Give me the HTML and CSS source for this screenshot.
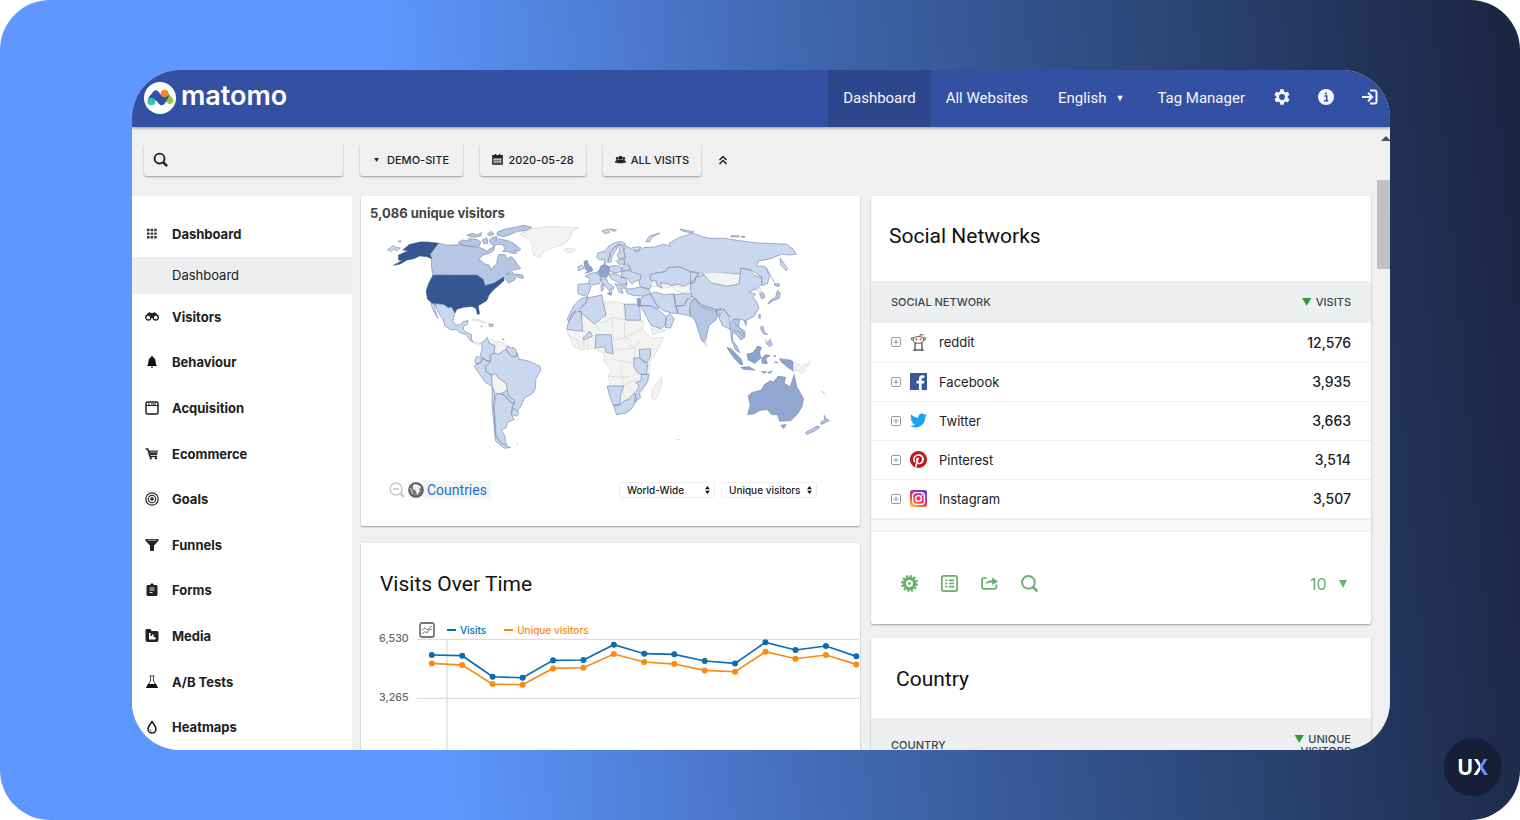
FILE: index.html
```html
<!DOCTYPE html>
<html lang="en">
<head>
    <meta charset="UTF-8">
    <meta name="viewport" content="width=device-width, initial-scale=1.0">
    <title>Matomo Dashboard</title>
    <link rel="stylesheet" href="styles.css">
</head>
<body>
    <div class="backdrop">
        <div class="window">
            <header class="topbar">
                <a href="#" class="brand">
                    <svg class="brand-mark" viewBox="43 51 92 92" aria-hidden="true">
                        <circle cx="89" cy="97" r="46" fill="#fff"/>
                        <path d="M103 86L117 104" stroke="#95c748" stroke-width="20" stroke-linecap="round"/>
                        <path d="M66 100L77 86L94 107L103 92" fill="none" stroke="#3152a0" stroke-width="21" stroke-linecap="round" stroke-linejoin="round"/>
                        <circle cx="102" cy="84" r="11" fill="#f38334"/>
                        <circle cx="64" cy="107" r="11" fill="#35bfc0"/>
                    </svg>
                    <span class="brand-name">matomo</span>
                </a>
                <nav class="topnav">
                    <a href="#" class="active">Dashboard</a>
                    <a href="#">All Websites</a>
                    <button type="button" class="language">English <span class="caret">▼</span></button>
                    <a href="#">Tag Manager</a>
                    <a href="#" class="icon-link" aria-label="Administration">
                        <svg viewBox="2 2 20 20"><path fill="currentColor" d="M19.14 12.94c.04-.3.06-.61.06-.94 0-.32-.02-.64-.07-.94l2.03-1.58c.18-.14.23-.41.12-.61l-1.92-3.32c-.12-.22-.37-.29-.59-.22l-2.39.96c-.5-.38-1.03-.7-1.62-.94l-.36-2.54c-.04-.24-.24-.41-.48-.41h-3.84c-.24 0-.43.17-.47.41l-.36 2.54c-.59.24-1.13.57-1.62.94l-2.39-.96c-.22-.08-.47 0-.59.22L2.74 8.87c-.12.21-.08.47.12.61l2.03 1.58c-.05.3-.09.63-.09.94s.02.64.07.94l-2.03 1.58c-.18.14-.23.41-.12.61l1.92 3.32c.12.22.37.29.59.22l2.39-.96c.5.38 1.03.7 1.62.94l.36 2.54c.05.24.24.41.48.41h3.84c.24 0 .44-.17.47-.41l.36-2.54c.59-.24 1.13-.56 1.62-.94l2.39.96c.22.08.47 0 .59-.22l1.92-3.32c.12-.22.07-.47-.12-.61l-2.01-1.58zM12 15.6a3.6 3.6 0 1 1 0-7.2 3.6 3.6 0 0 1 0 7.2z"/></svg>
                    </a>
                    <a href="#" class="icon-link" aria-label="Help">
                        <svg viewBox="0 0 16 16"><circle cx="8" cy="8" r="8" fill="currentColor"/><path d="M6.4 7h2.300v4.200M6 11.700h4.200M8 3.400v2" fill="none" stroke="#3450a3" stroke-width="1.600"/></svg>
                    </a>
                    <a href="#" class="icon-link" aria-label="Sign in">
                        <svg viewBox="0 0 16 16" fill="none" stroke="currentColor" stroke-width="2"><path d="M8 1.500h4.500a2 2 0 0 1 2 2v9a2 2 0 0 1-2 2H8M0 8h9M6 3.800L10.200 8L6 12.200"/></svg>
                    </a>
                </nav>
            </header>

            <div class="body">
                <div class="page">
                    <div class="toolbar">
                        <label class="search">
                            <svg viewBox="0 0 16 16" fill="none" stroke="#222" stroke-width="2"><circle cx="7" cy="7" r="5.300"/><path d="M11 11l4 4" stroke-width="2.600"/></svg>
                            <input type="search" aria-label="Search">
                        </label>
                        <button type="button" class="tool site"><span class="caret">▼</span>DEMO-SITE</button>
                        <button type="button" class="tool date">
                            <svg viewBox="0 0 12 12"><path d="M1 2h10v9H1z" fill="none" stroke="#222" stroke-width="1.600"/><path d="M1 2h10v3H1zM3 0h1.500v2H3zM7.500 0h1.500v2H7.500z" fill="#222"/><path d="M2 7h8M2 9h8M4.500 5v6M7.500 5v6" stroke="#222" stroke-width=".6"/></svg>
                            2020-05-28
                        </button>
                        <button type="button" class="tool visits">
                            <svg viewBox="0 0 12 12" fill="#222"><circle cx="6" cy="4" r="2.200"/><circle cx="2.500" cy="5" r="1.600"/><circle cx="9.500" cy="5" r="1.600"/><path d="M0 9.500q0-3 2.500-3h7q2.500 0 2.500 3zM3 10V8q0-2 3-2t3 2v2z"/></svg>
                            ALL VISITS
                        </button>
                        <button type="button" class="collapse" aria-label="Collapse">
                            <svg viewBox="0 0 10 10" fill="none" stroke="#222" stroke-width="1.500"><path d="M1.500 5L5 1.500L8.500 5M1.500 9L5 5.500L8.500 9"/></svg>
                        </button>
                    </div>

                    <div class="columns">
                        <nav class="sidebar">
                            <a href="#" class="item current">
                                <svg viewBox="0 0 14 14"><path d="M2 3h10M2 6.600h10M2 10.200h10" stroke="#333" stroke-width="2.400" stroke-dasharray="2.500 1.100"/></svg>
                                Dashboard
                            </a>
                            <a href="#" class="subitem">Dashboard</a>
                            <a href="#" class="item">
                                <svg viewBox="0 0 14 14"><path d="M3 3q2-1.500 3 0h2q1-1.500 3 0l2.800 4-4-1-1.500 2H5.700L4.500 6l-4 1z" fill="#222"/><circle cx="3.300" cy="7.500" r="2.500" fill="#fff" stroke="#222" stroke-width="1.300"/><circle cx="10.700" cy="7.500" r="2.500" fill="#fff" stroke="#222" stroke-width="1.300"/></svg>
                                Visitors
                            </a>
                            <a href="#" class="item">
                                <svg viewBox="0 0 14 14" fill="#111"><path d="M7 1q1 0 1 1.200Q10.500 3 10.500 6q0 3 1.500 5H2q1.500-2 1.500-5 0-3 2.500-3.800Q6 1 7 1zM5.800 11.500h2.400q-.2 1.200-1.200 1.200t-1.200-1.200z"/></svg>
                                Behaviour
                            </a>
                            <a href="#" class="item">
                                <svg viewBox="0 0 14 14" fill="none" stroke="#222"><rect x="1" y="1" width="12" height="12" rx="1.500" stroke-width="1.500"/><path d="M1 4.500h12M3 3h2M6 3h5"/></svg>
                                Acquisition
                            </a>
                            <a href="#" class="item">
                                <svg viewBox="0 0 14 14"><path d="M.5 2h2.300L5 9.500h7" fill="none" stroke="#222" stroke-width="1.500"/><path d="M3.500 3.500H13L12 8H5z" fill="#333"/><path d="M5 5h7" stroke="#fff" stroke-width=".5"/><circle cx="5.800" cy="11.300" r="1.100"/><circle cx="11" cy="11.300" r="1.100"/></svg>
                                Ecommerce
                            </a>
                            <a href="#" class="item">
                                <svg viewBox="0 0 14 14" fill="none" stroke="#333"><circle cx="7" cy="7" r="6.200" stroke-width="1.300"/><circle cx="7" cy="7" r="3.700" stroke-width="1.200"/><circle cx="7" cy="7" r="1.300" fill="#222"/></svg>
                                Goals
                            </a>
                            <a href="#" class="item">
                                <svg viewBox="0 0 14 14" fill="#222"><path d="M.5 1h13v1.800L9 7.500v5.500H5V7.500L.5 2.800z"/><path d="M2.500 2.200h9" stroke="#ccc" stroke-width=".9"/></svg>
                                Funnels
                            </a>
                            <a href="#" class="item">
                                <svg viewBox="0 0 14 14"><path d="M2.500 2H5l1-1.500h2L9 2h2.500l1 1v9l-1 1h-9l-1-1V3z" fill="#222"/><path d="M4.500 5h5M4.500 7h5M4.500 9.500h3" stroke="#fff" stroke-width=".9"/></svg>
                                Forms
                            </a>
                            <a href="#" class="item">
                                <svg viewBox="0 0 14 14"><path d="M1.500 0h4l1 2H12q1.500 0 1.500 1.500V11q0 2-2 2h-9q-2 0-2-2V1.500Q.5 0 1.500 0z" fill="#222"/><path d="M4 10.500V4h1.500v3h1.500V5.500h1.500v2.500H10.500v2.500z" fill="#fff"/></svg>
                                Media
                            </a>
                            <a href="#" class="item">
                                <svg viewBox="0 0 14 14"><path d="M4.500 1h5M5.500 1v5L2 12h10L8.500 6V1" fill="none" stroke="#444"/><path d="M3 9h8l2 4H1z" fill="#111"/></svg>
                                A/B Tests
                            </a>
                            <a href="#" class="item">
                                <svg viewBox="0 0 14 14" fill="none" stroke="#222" stroke-width="1.600"><path d="M7 1.500Q3 7 3 9a4 4 0 0 0 8 0Q11 7 7 1.500z"/><path d="M5 9.500q.3 1.300 1.500 1.600" stroke-width="1"/></svg>
                                Heatmaps
                            </a>
                        </nav>

                        <main class="widgets">
                            <div class="column left">
                                <section class="card map-card">
                                    <h2 class="map-title">5,086 unique visitors</h2>
                                    <svg class="map" viewBox="60 96 1380 690" role="img" aria-label="World map of unique visitors">
                                        <!-- Americas -->
                                        <path class="c1" d="M80 180L98 166L104 172L118 174L108 182L98 178L90 184ZM111 154l8-2v4z"/>
                                        <path class="c2" d="M232 160L262 166L300 164L330 170L355 172L366 176L378 184L392 174L402 170L398 182L386 190L365 196L355 208L372 222L386 226L390 242L396 232L408 222L410 206L414 194L432 194L440 206L452 200L462 210L470 224L480 236L458 240L436 254L456 248L468 256L462 270L444 280L432 264L410 276L388 288L372 290L366 268L350 258L216 256L212 232L212 208L207 193Z"/>
                                        <path class="c2" d="M292 158L304 150L330 154L322 146L346 148L360 156L356 168L334 170L308 166ZM318 136L334 130L350 134L362 128L360 138L338 142ZM364 150L378 144L382 160L370 162ZM380 132L392 124L400 132L386 138ZM386 150L396 142L410 140L404 152L414 146L430 150L446 154L462 162L480 178L472 184L460 180L468 190L452 190L440 184L426 186L432 176L426 164L408 164L398 168L390 160ZM410 126L430 118L462 112L490 106L514 112L496 122L470 124L442 136L426 140L408 134ZM468 252L486 256L488 266L472 262Z"/>
                                        <path class="c0" d="M478 132L510 118L560 110L598 110L654 114L634 124L630 140L624 148L612 162L580 172L556 182L546 190L536 204L520 196L514 178L516 164L506 148L484 138ZM610 180L624 174L644 178L640 186L620 188Z"/>
                                        <path class="us" d="M113 210L112 196L130 188L143 182L126 180L145 164L178 156L200 156L232 160L207 193L212 206L196 200L176 198L160 206L138 210L118 222L98 226L124 212Z"/>
                                        <path class="us" d="M216 256L348 256L366 268L372 288L400 280L428 262L430 272L412 288L398 300L384 316L378 332L352 348L356 372L350 374L346 356L334 350L308 352L288 358L282 370L276 364L272 352L262 354L248 344L214 340L200 328L196 304L202 284L212 264Z"/>
                                        <path class="c1" d="M210 340L222 344L222 360L232 386L224 376L214 354ZM222 342L248 344L262 354L272 352L282 370L276 392L284 406L300 404L306 396L322 392L318 404L308 410L308 420L318 428L332 434L332 448L338 458L326 450L316 434L296 428L290 420L270 420L252 408L246 388L232 368ZM384 402L398 404L396 410L386 410Z"/>
                                        <path class="c0" d="M334 390L348 386L378 400L362 396ZM338 458L352 460L362 458L350 466ZM384 460L390 448L404 456L428 458L440 468L436 478L424 486L412 494L402 490L402 468ZM394 556L404 552L416 568L436 580L440 600L420 612L406 612L396 592Z"/>
                                        <path class="c1" d="M440 468L454 476L456 472L464 478L468 490L468 500L452 500L444 492L436 478ZM362 460L380 442L384 460L402 468L400 490L388 496L390 516L376 512L358 498L364 480ZM348 500L366 506L360 518L346 524L342 512ZM346 524L360 518L366 506L376 512L390 516L374 530L376 546L392 556L394 590L374 578L358 556L340 530Z"/>
                                        <path class="c1" d="M402 490L412 494L424 486L436 478L444 492L452 500L468 500L470 490L474 508L504 514L538 530L540 542L526 566L524 598L514 612L492 624L480 650L468 666L454 654L462 640L444 620L436 606L440 600L436 580L416 568L404 552L392 556L376 546L374 530L390 516L388 496Z"/>
                                        <path class="c1" d="M420 612L440 602L444 620L462 632L460 642L448 636L432 618ZM456 654L474 668L468 680L452 674ZM406 612L420 612L432 618L448 636L460 642L454 654L452 674L460 690L440 698L436 714L422 722L432 738L434 756L438 766L420 758L406 738L404 700L400 650ZM394 590L402 612L398 650L402 700L404 738L420 762L450 774L430 776L404 754L400 710L394 650Z"/>
                                        <path class="dot" d="M360 408h4v3h-4zM426 448h4v3h-4zM468 760h3v2h-3zM952 748h4v2h-4z"/>

                                        <!-- Europe, Africa and Russia -->
                                        <g transform="translate(600 75)">
                                            <path class="c1" d="M190 110L194 92L210 100L226 96L242 96L234 108L220 106L228 112L250 98L282 96L310 88L330 94L326 86L342 76L360 66L388 58L396 54L430 66L450 70L492 70L530 76L590 84L640 86L680 88L700 104L708 118L690 120L664 118L648 124L630 132L594 138L590 154L612 154L618 160L628 184L622 206L606 212L604 186L570 164L542 160L544 178L462 172L434 180L408 172L390 170L358 156L324 158L316 170L280 176L268 184L276 204L268 222L240 216L236 202L240 184L214 172L206 152L190 148L194 130Z"/>
                                            <path class="c1" d="M256 80L266 64L298 54L274 68L268 80ZM358 42L400 50L392 54L366 48ZM660 130L682 160L678 168L662 150ZM512 62h24v4h-24zM544 64h10v3h-10zM124 48L142 42L148 52L132 56ZM146 42L168 44L162 50Z"/>
                                            <path class="c1" d="M108 126L112 114L134 108L146 92L166 82L184 80L196 88L188 92L172 88L160 98L146 112L150 124L142 136L132 148L130 132L118 136ZM172 88L188 94L190 110L194 128L176 132L170 120L178 108ZM150 114L160 98L170 92L166 108L156 120L152 140L142 144L146 126Z"/>
                                            <path class="c1" d="M168 138L190 130L192 148L176 148ZM186 156L196 146L208 156L206 166L184 166ZM146 154L170 152L182 156L184 170L164 174L146 168ZM184 170L206 166L216 172L242 180L240 194L222 200L214 208L200 190L182 188ZM144 178L164 176L184 186L196 190L200 206L182 208L168 200L150 190ZM164 206L184 212L198 208L196 220L182 220L188 236L176 232L170 218Z"/>
                                            <path class="c1" d="M52 208L84 206L92 214L82 240L66 242L52 236ZM74 184L90 176L108 172L122 186L118 206L94 210L84 204L88 190ZM108 172L116 166L118 184ZM118 192L138 192L142 204L160 216L158 224L150 220L154 234L146 238L146 226L130 210ZM122 210l6-4v20l-6 4zM140 236l14 0-2 6z"/>
                                            <path class="c3" d="M70 140L80 136L84 150L94 158L96 168L74 176L82 166L74 164ZM120 154L132 148L144 154L146 174L138 188L122 186L116 168Z"/>
                                            <path class="c1" d="M52 156L64 150L70 160L54 168ZM196 222L214 222L240 216L266 224L270 238L246 244L220 242L200 236Z"/>
                                            <path class="c0" d="M268 204L290 200L296 214L278 216ZM302 204L324 206L358 216L396 206L388 220L400 220L372 236L352 230L334 216L302 220Z"/>
                                            <path class="c1" d="M268 184L280 176L316 170L324 158L358 156L390 170L416 178L414 186L400 204L384 206L370 214L352 208L332 212L320 206L300 204L304 220L290 212L288 198L272 196ZM270 236L286 232L312 240L340 236L346 258L340 270L352 284L350 296L330 294L306 286L288 268ZM340 240L372 236L380 238L398 232L396 246L380 252L372 272L346 274ZM352 296L346 274L372 272L380 252L400 254L396 276L388 284L390 304L374 300Z"/>
                                            <path class="c1" d="M240 252L258 240L270 238L288 270L296 282L270 272L240 272ZM240 272L270 274L300 290L318 306L314 330L302 342L272 332L258 306ZM318 304L328 296L342 312L330 340L314 338Z"/>
                                            <path class="c3" d="M230 252l8-2v26l-6 2z"/>
                                            <path class="c0" d="M272 342L318 346L276 360ZM130 264L160 260L190 266L192 314L228 316L248 318L246 344L270 370L310 368L288 412L268 440L266 490L252 520L228 560L196 600L150 520L144 484L152 468L130 440L132 418L102 402L60 404L40 396L18 350L24 326L66 300L130 324L136 300Z"/>
                                            <path class="line" d="M130 324L156 308V344M156 308L192 314M98 320L120 348M66 350L92 352M20 360L66 384M46 372L60 402M70 376V400M82 376V402M192 320L192 368L214 380M156 346L160 376L184 372L246 344M158 404L214 402L240 380M224 402L220 446L152 432M144 484L184 488M190 510L236 490M190 376L224 402M180 450L184 488L210 486M190 490L182 516L196 556L222 534L202 512"/>
                                            <path class="c0" d="M274 550L276 526L302 486L306 498L290 548L282 558Z"/>
                                            <path class="c1" d="M54 288L76 264L80 250L124 240L128 264L136 300L102 328ZM20 312L40 272L60 252L82 244L76 264L46 288L24 320ZM20 334L36 292L62 290L66 350L20 344ZM192 268L228 268L238 278L240 316H196ZM66 370L88 350L96 364L70 376ZM104 400L106 360L152 360L158 418L136 412L132 396ZM236 404L270 402L270 426L258 446L238 430ZM220 430L238 430L262 448L258 480L232 476L220 456ZM226 502L242 498L242 480L264 478L262 500L236 534L240 550L222 560L228 530L236 514ZM140 514L190 514L180 540L178 570L158 572L148 546ZM160 572L178 570L188 560L206 554L222 534L228 558L212 584L192 596L168 600Z"/>
                                            <path class="c2" d="M390 264L404 250L420 276L462 290L476 292L466 316L446 332L434 384L424 378L404 316L390 304L388 284Z"/>
                                            <path class="c0" d="M434 376L442 392L434 394ZM430 176L462 172L544 180L536 206L500 214L450 204Z"/>
                                        </g>

                                        <!-- East Asia and Oceania -->
                                        <g transform="translate(990 75)">
                                            <path class="c1" d="M0 208L12 204L16 188L40 180L62 204L110 214L146 208L150 178L152 160L180 166L192 182L214 186L214 210L198 222L176 230L196 238L188 248L200 262L206 280L192 304L166 318L146 312L130 318L114 300L100 282L80 288L34 274L16 252L2 240ZM0 170L24 176L10 196L0 204ZM76 286L92 280L86 306L82 300ZM86 308L100 282L114 302L120 320L124 346L112 340L96 332Z"/>
                                            <path class="c2" d="M118 324L132 312L148 316L144 336L164 350L164 368L150 376L140 360L126 352L128 380L140 394L148 414L136 406L124 376Z"/>
                                            <path class="line-dark" d="M132 324L150 340L162 360M128 346L150 352L158 366M2 244L38 272L80 284L80 300"/>
                                            <path class="c2" d="M162 318L170 322L166 332ZM208 236L218 232L224 248L214 252ZM234 268L238 258L256 248L262 226L270 236L268 250L248 258ZM252 208L266 206L268 214L258 214ZM206 300l4-2v14l-4-2zM210 338L218 334L222 350L232 360L218 356ZM224 374L230 384M228 386L240 374L246 390L238 396Z"/>
                                            <path class="c0" d="M198 226L210 220L214 232L204 232Z"/>
                                            <path class="c3" d="M110 398L122 402L152 432L158 450L148 448L128 426ZM152 458L176 456L194 466L160 464ZM170 418L188 414L202 394L214 398L208 412L212 430L194 446L174 436ZM214 430L226 420L240 422L226 432L232 446L216 446ZM268 432L282 434L300 436L308 440L310 470L290 456L272 440ZM214 470l14 2-6 4zM232 474l14-6-6 8zM250 424l6-2v4zM252 442l12 2z"/>
                                            <path class="c0" d="M310 440L328 450L346 470L336 476L320 466L310 470ZM336 452L350 448L360 440L358 450L344 458Z"/>
                                            <path class="c4" d="M172 600L180 572L174 544L184 534L214 526L222 510L240 498L250 502L264 484L286 488L282 506L300 516L312 480L320 516L340 552L336 576L322 598L302 618L268 620L262 600L244 600L230 584L208 588L190 598ZM272 632L288 630L280 642Z"/>
                                            <path class="c2" d="M402 602L408 612L418 618L394 630L392 622L404 616ZM346 654L382 634L390 638L372 650L350 660Z"/>
                                            <path class="line-dark" d="M226 156L244 186L256 210M394 528L404 538"/>
                                        </g>
                                    </svg>
                                    <div class="map-controls">
                                        <button type="button" class="zoom-out" aria-label="Zoom out">
                                            <svg viewBox="0 0 16 16" fill="none" stroke="#c8c8c8" stroke-width="1.500"><circle cx="7" cy="7" r="6"/><path d="M4 7h6"/><path d="M11.500 11.500L15 15" stroke-width="2.400"/></svg>
                                        </button>
                                        <a href="#" class="countries">
                                            <svg viewBox="0 0 16 16"><circle cx="8" cy="8" r="7" fill="#777" stroke="#555" stroke-width="1.500"/><path d="M5 3Q8 1 12 4L13 6L11 7L12 9L9 13L8 9L5 7Z" fill="#f1f1f1"/><path d="M2 6L4 9L4 12" fill="none" stroke="#ddd"/></svg>
                                            <span>Countries</span>
                                        </a>
                                        <div class="select-box">
                                            <select aria-label="Region"><option>World-Wide</option></select>
                                            <svg viewBox="0 0 6 10"><path d="M3 0L6 4H0zM3 10L0 6h6z" fill="#111"/></svg>
                                        </div>
                                        <div class="select-box">
                                            <select aria-label="Metric"><option>Unique visitors</option></select>
                                            <svg viewBox="0 0 6 10"><path d="M3 0L6 4H0zM3 10L0 6h6z" fill="#111"/></svg>
                                        </div>
                                    </div>
                                </section>

                                <section class="card visits-card">
                                    <h2 class="card-title">Visits Over Time</h2>
                                    <div class="legend">
                                        <button type="button" aria-label="Select metrics">
                                            <svg viewBox="0 0 16 16" fill="none" stroke="#777"><rect x="1" y="1" width="14" height="14" rx="2" stroke-width="1.800"/><path d="M3 8l3-2 2 2 5-4M3 12l3-2.500 2 1.500 2-3 3-1"/></svg>
                                        </button>
                                        <span class="key visits-key">Visits</span>
                                        <span class="key unique-key">Unique visitors</span>
                                    </div>
                                    <svg class="chart" viewBox="3 506 1494 336" role="img" aria-label="Visits over time">
                                        <path d="M170 507H1494M170 684H1494M260 507V842" stroke="#ddd" stroke-width="4"/>
                                        <text x="57" y="514">6,530</text>
                                        <text x="57" y="691">3,265</text>
                                        <g class="series-visits">
                                            <polyline points="215,554 306,556 397,619 487,622 578,570 669,569 760,523 851,550 941,552 1032,572 1123,579 1214,516 1304,539 1395,527 1486,558"/>
                                            <path class="points" d="M215 554h0M306 556h0M397 619h0M487 622h0M578 570h0M669 569h0M760 523h0M851 550h0M941 552h0M1032 572h0M1123 579h0M1214 516h0M1304 539h0M1395 527h0M1486 558h0"/>
                                        </g>
                                        <g class="series-unique">
                                            <polyline points="215,579 306,584 397,641 487,643 578,594 669,592 760,551 851,575 941,581 1032,600 1123,604 1214,544 1304,565 1395,554 1486,582"/>
                                            <path class="points" d="M215 579h0M306 584h0M397 641h0M487 643h0M578 594h0M669 592h0M760 551h0M851 575h0M941 581h0M1032 600h0M1123 604h0M1214 544h0M1304 565h0M1395 554h0M1486 582h0"/>
                                        </g>
                                    </svg>
                                </section>
                            </div>

                            <div class="column right">
                                <section class="card">
                                    <h2 class="card-title social-title">Social Networks</h2>
                                    <table>
                                        <thead>
                                            <tr><th>SOCIAL NETWORK</th><th><span class="sort">▼</span>VISITS</th></tr>
                                        </thead>
                                        <tbody>
                                            <tr>
                                                <td><div class="network">
                                                    <svg class="plus" viewBox="0 0 10 10"><rect x=".5" y=".5" width="9" height="9" rx="1.500"/><path d="M5 2.500v5M2.500 5h5"/></svg>
                                                    <svg class="logo" viewBox="0 0 16 16" fill="#fff" stroke="#666"><path d="M5 8h6l.5 7h-7z" stroke-width="1.400"/><path d="M3 15.500h3M10 15.500h3" stroke-width="1.500"/><circle cx="2.500" cy="4.500" r="1.200"/><circle cx="13.500" cy="4.500" r="1.200"/><ellipse cx="8" cy="5.500" rx="5" ry="3.200"/><path d="M9 2.300L10 .5l3 .5" fill="none"/><circle cx="6" cy="5" r="1" fill="#f4512c" stroke="none"/><circle cx="10" cy="5" r="1" fill="#f4512c" stroke="none"/></svg>
                                                    <a href="#">reddit</a>
                                                </div></td>
                                                <td>12,576</td>
                                            </tr>
                                            <tr>
                                                <td><div class="network">
                                                    <svg class="plus" viewBox="0 0 10 10"><rect x=".5" y=".5" width="9" height="9" rx="1.500"/><path d="M5 2.500v5M2.500 5h5"/></svg>
                                                    <svg class="logo" viewBox="0 0 16 16"><path d="M0 0h16v16H0z" fill="#3b5998"/><path d="M11 16V9.800h2.100l.4-2.500H11V5.800q0-1.200 1.300-1.200h1.300V2.300q-4.900-1-5.200 3v2H6.200v2.500h2.200V16z" fill="#fff"/></svg>
                                                    <a href="#">Facebook</a>
                                                </div></td>
                                                <td>3,935</td>
                                            </tr>
                                            <tr>
                                                <td><div class="network">
                                                    <svg class="plus" viewBox="0 0 10 10"><rect x=".5" y=".5" width="9" height="9" rx="1.500"/><path d="M5 2.500v5M2.500 5h5"/></svg>
                                                    <svg class="logo" viewBox="0 0 24 24"><path fill="#1da1f2" d="M23.953 4.570a10 10 0 01-2.825.775 4.958 4.958 0 002.163-2.723c-.951.555-2.005.959-3.127 1.184a4.920 4.920 0 00-8.384 4.482C7.690 8.095 4.067 6.130 1.640 3.162a4.822 4.822 0 00-.666 2.475c0 1.710.870 3.213 2.188 4.096a4.904 4.904 0 01-2.228-.616v.060a4.923 4.923 0 003.946 4.827 4.996 4.996 0 01-2.212.085 4.936 4.936 0 004.604 3.417 9.867 9.867 0 01-6.102 2.105c-.390 0-.779-.023-1.170-.067a13.995 13.995 0 007.557 2.209c9.053 0 13.998-7.496 13.998-13.985 0-.210 0-.420-.015-.630A9.935 9.935 0 0024 4.590z"/></svg>
                                                    <a href="#">Twitter</a>
                                                </div></td>
                                                <td>3,663</td>
                                            </tr>
                                            <tr>
                                                <td><div class="network">
                                                    <svg class="plus" viewBox="0 0 10 10"><rect x=".5" y=".5" width="9" height="9" rx="1.500"/><path d="M5 2.500v5M2.500 5h5"/></svg>
                                                    <svg class="logo" viewBox="0 0 24 24"><path fill="#c8141c" d="M12 0C5.373 0 0 5.372 0 12c0 5.084 3.163 9.426 7.627 11.174-.105-.949-.200-2.405.042-3.441.218-.937 1.407-5.965 1.407-5.965s-.359-.719-.359-1.782c0-1.668.967-2.914 2.171-2.914 1.023 0 1.518.769 1.518 1.690 0 1.029-.655 2.568-.994 3.995-.283 1.194.599 2.169 1.777 2.169 2.133 0 3.772-2.249 3.772-5.495 0-2.873-2.064-4.882-5.012-4.882-3.414 0-5.418 2.561-5.418 5.207 0 1.031.397 2.138.893 2.738a.360.360 0 01.083.345l-.333 1.360c-.053.220-.174.267-.402.161-1.499-.698-2.436-2.889-2.436-4.649 0-3.785 2.750-7.262 7.929-7.262 4.163 0 7.398 2.967 7.398 6.931 0 4.136-2.607 7.464-6.227 7.464-1.216 0-2.359-.631-2.750-1.378l-.748 2.853c-.271 1.043-1.002 2.350-1.492 3.146C9.570 23.812 10.763 24 12 24c6.627 0 12-5.373 12-12 0-6.628-5.373-12-12-12z"/></svg>
                                                    <a href="#">Pinterest</a>
                                                </div></td>
                                                <td>3,514</td>
                                            </tr>
                                            <tr>
                                                <td><div class="network">
                                                    <svg class="plus" viewBox="0 0 10 10"><rect x=".5" y=".5" width="9" height="9" rx="1.500"/><path d="M5 2.500v5M2.500 5h5"/></svg>
                                                    <svg class="logo" viewBox="0 0 16 16">
                                                        <defs><linearGradient id="insta" x1="0.200" y1="1" x2="0.700" y2="0"><stop offset="0" stop-color="#fdc04f"/><stop offset=".35" stop-color="#f5483b"/><stop offset=".65" stop-color="#cf2d92"/><stop offset="1" stop-color="#6a3fd0"/></linearGradient></defs>
                                                        <rect width="16" height="16" rx="2" fill="url(#insta)"/><rect x="2.500" y="2.500" width="11" height="11" rx="3" fill="none" stroke="#fff" stroke-width="1.300"/><circle cx="8" cy="8" r="2.700" fill="none" stroke="#fff" stroke-width="1.300"/><circle cx="11.300" cy="4.700" r=".8" fill="#fff"/></svg>
                                                    <a href="#">Instagram</a>
                                                </div></td>
                                                <td>3,507</td>
                                            </tr>
                                        </tbody>
                                    </table>
                                    <div class="table-end"></div>
                                    <div class="card-footer">
                                        <button type="button" aria-label="Configure">
                                            <svg viewBox="0 0 16 16" fill="none" stroke="currentColor"><circle cx="8" cy="8" r="4.800" stroke-width="3"/><circle cx="8" cy="8" r="7" stroke-width="2" stroke-dasharray="2.200 1.465"/><circle cx="8" cy="8" r="1.300" fill="currentColor" stroke="none"/></svg>
                                        </button>
                                        <button type="button" aria-label="Change view">
                                            <svg viewBox="0 0 16 16" fill="none" stroke="currentColor" stroke-width="1.600"><rect x=".8" y=".8" width="14.400" height="14.400" rx="2"/><path d="M4 5h2M4 8h2M4 11h2M7.500 5h5M7.500 8h5M7.500 11h5"/></svg>
                                        </button>
                                        <button type="button" aria-label="Export">
                                            <svg viewBox="0 0 16 16" fill="none" stroke="currentColor" stroke-width="1.700"><path d="M5 3H2.500Q1 3 1 4.500v7Q1 13 2.500 13h10.500q1.500 0 1.500-1.500V9"/><path d="M4.500 9q0-4 6-4V2.300L16 6l-5.500 3.500V7Q6 7 4.500 9z" fill="currentColor" stroke="none"/></svg>
                                        </button>
                                        <button type="button" aria-label="Search rows">
                                            <svg viewBox="0 0 16 16" fill="none" stroke="currentColor" stroke-width="1.800"><circle cx="7" cy="7" r="6"/><path d="M11.500 11.500l4 4" stroke-width="2.400"/></svg>
                                        </button>
                                        <div class="rows">
                                            <select aria-label="Rows to show"><option>10</option></select>
                                            <svg viewBox="0 0 8 8"><path d="M0 0h8L4 8z" fill="currentColor"/></svg>
                                        </div>
                                    </div>
                                </section>

                                <section class="card country-card">
                                    <h2 class="card-title country-title">Country</h2>
                                    <table>
                                        <thead>
                                            <tr><th>COUNTRY</th><th><span class="sort">▼</span>UNIQUE<br>VISITORS</th></tr>
                                        </thead>
                                    </table>
                                </section>
                            </div>
                        </main>
                    </div>
                </div>
                <div class="scrollbar">
                    <div class="scroll-arrow"></div>
                    <div class="scroll-thumb"></div>
                </div>
            </div>
        </div>
        <a href="#" class="badge" aria-label="UX">U<span>X</span></a>
    </div>
</body>
</html>
```
FILE: styles.css
```css
* {
    box-sizing: border-box;
}
body {
    margin: 0;
    background: #fff;
    font-family: Inter, "Liberation Sans", sans-serif;
    color: #212121;
}
a {
    color: inherit;
    text-decoration: none;
}
button, select, input {
    margin: 0;
    padding: 0;
    border: 0;
    background: none;
    font: inherit;
    color: inherit;
}
svg {
    display: block;
    flex-shrink: 0;
}
.backdrop {
    position: relative;
    height: 100vh;
    padding: 70px 130px 70px 132px;
    border-radius: 50px;
    background: linear-gradient(85deg, #5e97ff 28%, #3f66ae 55%, #24375f 87%, #1b2643 99%);
}
.window {
    display: flex;
    flex-direction: column;
    height: 100%;
    border-radius: 48px;
    overflow: hidden;
    background: #eff0f1;
}

/* top bar */
.topbar {
    display: flex;
    justify-content: space-between;
    flex-shrink: 0;
    height: 57px;
    padding-left: 12px;
    background: #3450a3;
    box-shadow: 0 1px 3px rgba(0, 0, 0, 0.4);
    z-index: 1;
    color: #fff;
}
.brand {
    display: flex;
    align-items: center;
    gap: 5px;
    padding-bottom: 2px;
}
.brand-mark {
    width: 32px;
    height: 32px;
}
.brand-name {
    font-size: 27px;
    font-weight: 600;
    line-height: 32px;
    padding-bottom: 4px;
}
.topnav {
    display: flex;
    font-family: Roboto, sans-serif;
    font-size: 15px;
    color: #f4f6fd;
}
.topnav > * {
    display: flex;
    align-items: center;
    padding: 0 15px 2px;
}
.topnav .active {
    background: #2d478f;
}
.topnav .language {
    gap: 9px;
    padding-right: 18px;
}
.caret {
    font-size: 9px;
}
.topnav .icon-link {
    padding: 0 14px 4px;
}
.icon-link:last-child {
    margin-right: -2px;
}
.icon-link svg {
    width: 16px;
    height: 16px;
}

/* page area */
.body {
    display: flex;
    flex: 1;
    min-height: 0;
}
.page {
    display: flex;
    flex-direction: column;
    flex: 1;
    min-width: 0;
    padding-right: 6px;
}
.scrollbar {
    width: 13px;
    padding-top: 9px;
}
.scroll-arrow {
    margin-left: 4px;
    width: 0;
    border: 5px solid transparent;
    border-top: 0;
    border-bottom-color: #505050;
}
.scroll-thumb {
    height: 89px;
    margin-top: 39px;
    background: #c1c1c1;
}
.toolbar {
    display: flex;
    align-items: center;
    flex-shrink: 0;
    gap: 17px;
    height: 69px;
    padding: 0 0 4px 12px;
}
.search, .tool {
    display: flex;
    align-items: center;
    height: 32px;
    border-radius: 2px;
    background: #f0f0f1;
    box-shadow: 0 1px 2px rgba(0, 0, 0, 0.35);
}
.search {
    width: 199px;
    padding-left: 9px;
}
.search svg {
    width: 15px;
    height: 15px;
}
.search input {
    width: 160px;
    outline: none;
}
.tool {
    justify-content: center;
    gap: 5px;
    font-size: 11px;
    font-weight: 500;
}
.tool svg {
    width: 11px;
    height: 11px;
}
.tool .caret {
    font-size: 5px;
}
.site {
    width: 103px;
    gap: 8px;
}
.date {
    width: 106px;
}
.visits {
    width: 98px;
}
.collapse svg {
    width: 10px;
    height: 10px;
}
.columns {
    display: flex;
    flex: 1;
    gap: 9px;
    min-height: 0;
}

/* left menu */
.sidebar {
    display: flex;
    flex-direction: column;
    width: 220px;
    flex-shrink: 0;
    background: #fff;
    font-size: 13px;
}
.item {
    display: flex;
    align-items: center;
    flex: 1;
    gap: 13px;
    padding-left: 13px;
    font-weight: 700;
}
.item.current {
    flex: none;
    height: 61px;
    padding-top: 14px;
}
.item svg {
    width: 14px;
    height: 14px;
}
.subitem {
    padding-left: 40px;
    line-height: 37px;
    background: #edeff0;
}

/* widgets */
.widgets {
    display: grid;
    grid-template-columns: 499fr 500fr;
    flex: 1;
    gap: 11px;
    min-width: 0;
}
.column {
    display: flex;
    flex-direction: column;
    min-width: 0;
}
.column.left {
    gap: 17px;
}
.column.right {
    gap: 14px;
}
.card {
    flex-shrink: 0;
    border-radius: 2px;
    background: #fff;
    box-shadow: 0 1px 2px rgba(0, 0, 0, 0.35);
}
.card-title {
    margin: 0;
    font-family: Roboto, sans-serif;
    font-size: 21px;
    font-weight: 400;
    line-height: 26px;
    color: #111;
}
.map-card {
    padding-bottom: 27px;
}
.map-title {
    margin: 0;
    padding: 8px 9px 0;
    font-size: 13px;
    font-weight: 700;
    line-height: 18px;
    color: #444;
}
.map {
    width: 92%;
    margin-left: 20px;
    stroke: #7b8aae;
    stroke-width: 2;
    stroke-linejoin: round;
}
.c0 {
    fill: #f3f3f2;
    stroke: #d3d3d3;
}
.c1 {
    fill: #cad8ef;
}
.c2 {
    fill: #b6c7e6;
}
.c3 {
    fill: #8ba3cf;
}
.c4 {
    fill: #91a7cf;
}
.us {
    fill: #35578f;
    stroke: #35578f;
}
.dot {
    fill: #666;
    stroke: none;
}
.line {
    fill: none;
    stroke: #d3d3d3;
}
.line-dark {
    fill: none;
}
.map-controls {
    display: flex;
    align-items: center;
    height: 18px;
    margin-top: 29px;
    padding: 0 43px 0 28px;
}
.zoom-out svg {
    width: 16px;
    height: 16px;
}
.countries {
    display: flex;
    align-items: center;
    gap: 3px;
    margin: 0 auto 0 3px;
    padding-right: 4px;
    font-family: Roboto, sans-serif;
    font-size: 14px;
    line-height: 18px;
    color: #1d6fc9;
    background: #f3f4f5;
}
.countries svg {
    width: 16px;
    height: 16px;
}
.select-box {
    position: relative;
    margin-left: 6px;
    border: 1px solid #eee;
    border-radius: 3px;
}
.select-box select {
    display: block;
    width: 94px;
    height: 14px;
    padding-left: 7px;
    appearance: none;
    font-size: 10px;
    font-weight: 500;
}
.select-box svg {
    position: absolute;
    right: 4px;
    top: 3px;
    width: 5px;
    height: 8px;
}
.visits-card {
    padding-top: 28px;
}
.visits-card .card-title {
    padding-left: 19px;
}
.legend {
    display: flex;
    align-items: center;
    gap: 12px;
    height: 18px;
    margin-top: 24px;
    padding-left: 58px;
    font-size: 10px;
    font-weight: 500;
}
.legend svg {
    width: 16px;
    height: 16px;
}
.key {
    display: flex;
    align-items: center;
    gap: 4px;
    margin-right: 6px;
}
.key::before {
    content: "";
    width: 9px;
    height: 2px;
    background: currentColor;
}
.visits-key {
    color: #0b6bb3;
}
.unique-key {
    color: #f88a12;
}
.chart {
    width: 100%;
    overflow: visible;
    font-size: 32px;
    font-weight: 500;
    fill: #666;
}
.chart polyline {
    fill: none;
    stroke-width: 5;
}
.chart .points {
    stroke-width: 18;
    stroke-linecap: round;
}
.series-visits {
    stroke: #0b6bb3;
}
.series-unique {
    stroke: #f98b13;
}

/* report tables */
.social-title {
    padding: 27px 18px 32px;
}
.country-title {
    padding: 28px 25px 26px;
}
table {
    width: 100%;
    border-collapse: collapse;
}
th {
    height: 42px;
    padding: 0 20px;
    background: #eeeff0;
    font-size: 11px;
    font-weight: 500;
    line-height: 12px;
    text-align: left;
    color: #37474f;
}
th:last-child, td:last-child {
    text-align: right;
}
.sort {
    margin-right: 4px;
    font-size: 10px;
    color: #35963a;
}
td {
    height: 39px;
    padding: 0 20px;
    border-bottom: 1px solid #f0f0f0;
    font-size: 13px;
}
td:last-child {
    font-size: 14px;
    font-weight: 500;
}
.network {
    display: flex;
    align-items: center;
}
.plus {
    width: 10px;
    height: 10px;
    margin-right: 9px;
    fill: none;
    stroke: #999;
}
.logo {
    width: 17px;
    height: 17px;
    margin-right: 12px;
}
.table-end {
    height: 13px;
    background: #f9f9f9;
    border-top: 1px solid #e8e8e8;
    border-bottom: 1px solid #eee;
}
.card-footer {
    display: flex;
    align-items: center;
    gap: 23px;
    height: 92px;
    padding: 12px 24px 0 30px;
    color: #68b06c;
}
.card-footer button svg {
    width: 17px;
    height: 17px;
}
.rows {
    display: flex;
    align-items: center;
    gap: 12px;
    margin-left: auto;
}
.rows select {
    appearance: none;
    font-size: 16px;
}
.rows svg {
    width: 8px;
    height: 8px;
}
.country-card th {
    height: 54px;
}

/* corner badge */
.badge {
    position: absolute;
    right: 18px;
    bottom: 24px;
    display: flex;
    align-items: center;
    justify-content: center;
    width: 58px;
    height: 58px;
    border-radius: 50%;
    background: #161f36;
    font-size: 21px;
    font-weight: 700;
    color: #fff;
}
.badge span {
    background: linear-gradient(90deg, #fff 50%, #5e97ff 50%);
    background-clip: text;
    -webkit-background-clip: text;
    color: transparent;
}
```
